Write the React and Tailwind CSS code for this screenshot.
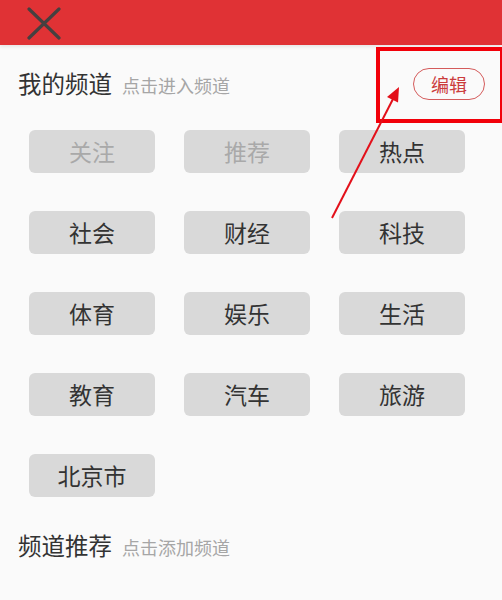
import React from "react";

const rows = [
  [
    { t: "关注", d: true },
    { t: "推荐", d: true },
    { t: "热点" },
  ],
  [{ t: "社会" }, { t: "财经" }, { t: "科技" }],
  [{ t: "体育" }, { t: "娱乐" }, { t: "生活" }],
  [{ t: "教育" }, { t: "汽车" }, { t: "旅游" }],
  [{ t: "北京市" }],
];

export default function App() {
  const items = rows.flat();
  return (
    <div
      className="relative w-[502px] h-[600px] overflow-hidden bg-[#fafafa]"
      style={{ fontFamily: '"Noto Sans CJK SC", "Noto Sans", sans-serif' }}
    >
      <div className="h-[45px] bg-[#e03235] flex items-center pl-[27px] shadow-[0_2px_3px_rgba(0,0,0,0.08)]">
        <svg width="34" height="34" viewBox="0 0 34 34" className="mt-[2px]">
          <path
            d="M2 2 L32 31 M32 2 L2 31"
            stroke="#454040"
            strokeWidth="3.2"
            strokeLinecap="round"
            fill="none"
          />
        </svg>
      </div>

      <div className="h-[77px] flex items-center justify-between pl-[18px] pr-[17px]">
        <div className="flex items-baseline">
          <span className="text-[23.5px] text-[#333333] leading-none">我的频道</span>
          <span className="ml-[10px] text-[18px] text-[#a6a6a6] leading-none">
            点击进入频道
          </span>
        </div>
        <div className="w-[72px] h-[32px] rounded-full border-[1.5px] border-[#d45b5b] flex items-center justify-center text-[18px] text-[#cb3c3c] leading-none">
          编辑
        </div>
      </div>

      <div className="mt-[8px] pl-[29px] grid grid-cols-[126px_126px_126px] gap-x-[29px] gap-y-[38px]">
        {items.map((it, i) => (
          <div
            key={i}
            className={
              "h-[43px] rounded-[6px] bg-[#d9d9d9] flex items-center justify-center text-[23px] leading-none " +
              (it.d ? "text-[#a9a9a9]" : "text-[#333333]")
            }
          >
            {it.t}
          </div>
        ))}
      </div>

      <div className="mt-[37px] pl-[18px] flex items-baseline">
        <span className="text-[23.5px] text-[#333333] leading-none">频道推荐</span>
        <span className="ml-[10px] text-[18px] text-[#a6a6a6] leading-none">
          点击添加频道
        </span>
      </div>

      <div className="absolute left-[376px] top-[47px] w-[128px] h-[76px] border-[4px] border-[#f2000a] pointer-events-none" />

      <svg
        className="absolute left-0 top-0 pointer-events-none"
        width="502"
        height="600"
        viewBox="0 0 502 600"
      >
        <line x1="332" y1="218" x2="393" y2="99" stroke="#e3101a" strokeWidth="2" />
        <polygon points="399,87 398,102.5 387,97" fill="#e3101a" />
      </svg>
    </div>
  );
}
